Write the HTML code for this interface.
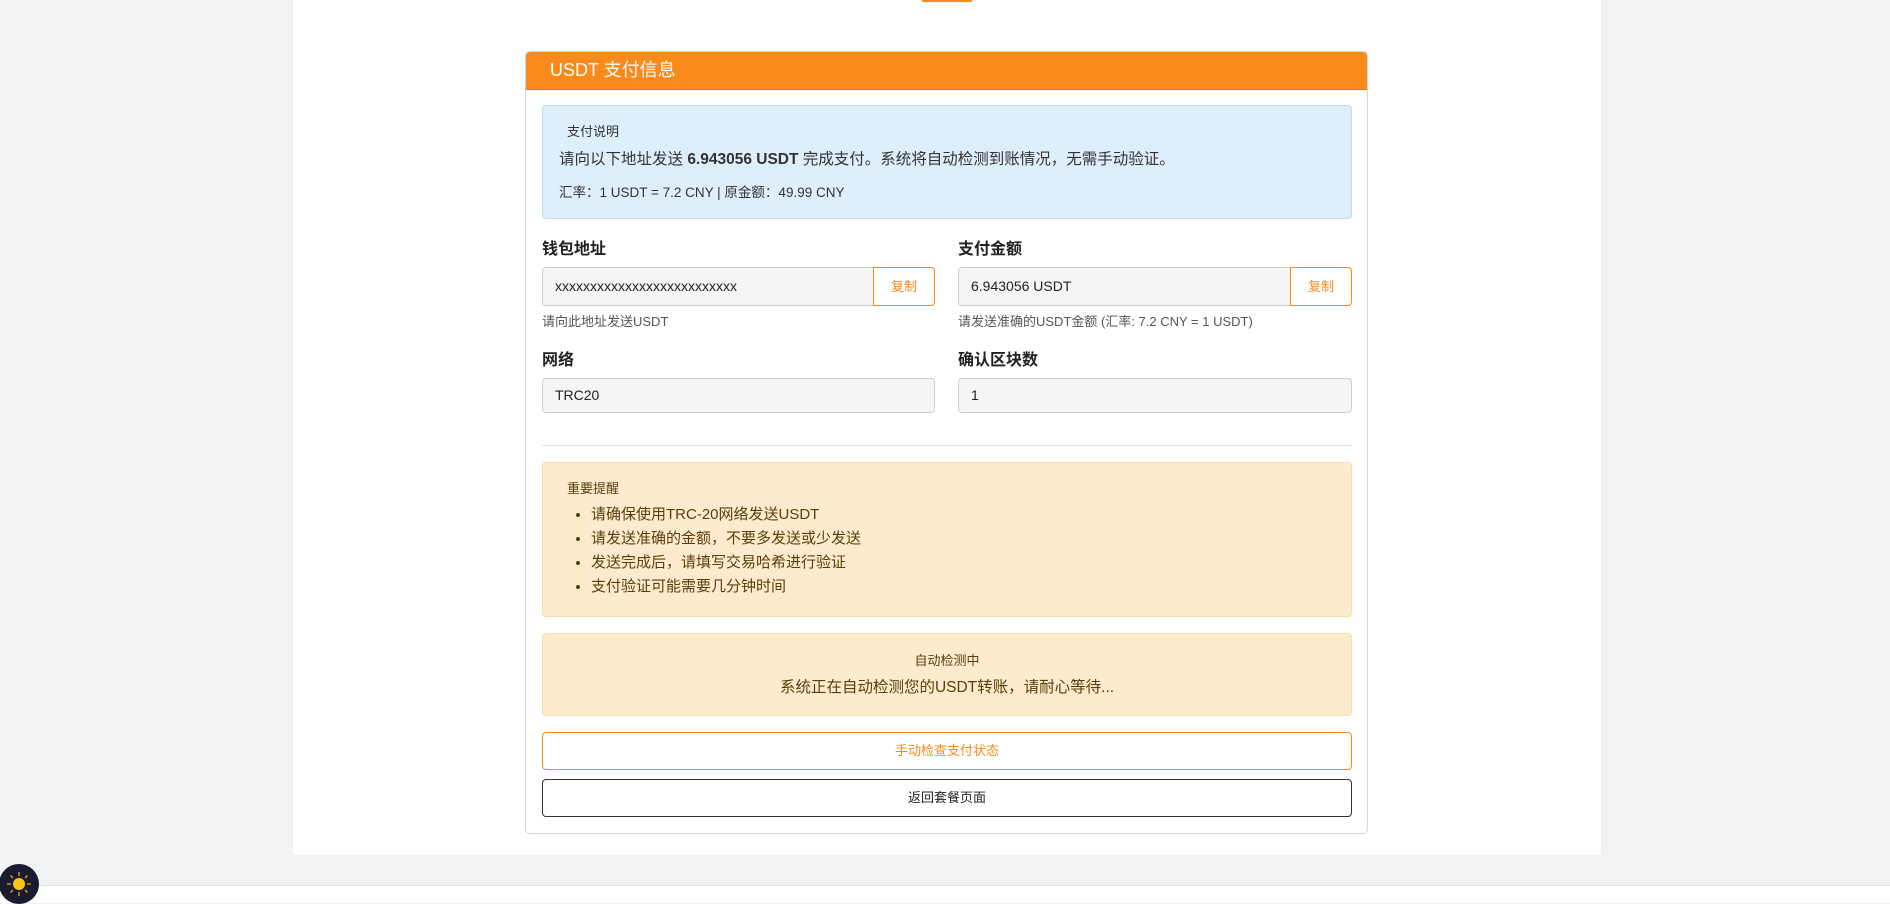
<!DOCTYPE html>
<html><head><meta charset="utf-8"><style>
*{box-sizing:border-box;margin:0;padding:0}
body{width:1890px;height:903px;background:#f1f2f4;font-family:"Liberation Sans","Noto Sans CJK SC",sans-serif;color:#222;position:relative;overflow:hidden}
.page{position:absolute;left:293px;top:0;width:1308px;height:855px;background:#fff}
.topbar{position:absolute;left:922px;top:0;width:50px;height:2px;background:#f98a1b}
.foot{position:absolute;left:0;top:885px;width:1890px;height:18px;background:#fff;border-top:1px solid #e2e2e2}
.card{position:absolute;left:525px;top:51px;width:843px;height:783px;border:1px solid #d6d6d6;border-radius:5px;overflow:hidden;background:#fff}
.hd{height:38px;background:#f98a1b;color:#fff;font-size:18px;line-height:37px;padding-left:24px;border-bottom:1px solid #e57a10}
.info{position:absolute;left:16px;top:53px;width:810px;height:114px;background:#dfeefc;border:1px solid #bfdcf5;border-radius:4px;padding:0 0 0 24px}
.abs{position:absolute;white-space:nowrap}
.lbl{font-size:16px;font-weight:bold;color:#222}
.inp{position:absolute;height:39px;background:#f5f5f5;border:1px solid #cfcfcf;border-radius:4px;font-size:14px;line-height:37px;padding-left:12px;color:#222}
.cp{position:absolute;top:0;right:-1px;width:62px;height:39px;border:1px solid #f98a1b;border-radius:0 4px 4px 0;background:#fff;color:#f98a1b;font-size:13px;text-align:center;line-height:37px;top:-1px}
.hint{font-size:13px;color:#555}
.warn{position:absolute;left:16px;top:410px;width:810px;height:155px;background:#feebcd;border:1px solid #f8dcaf;border-radius:4px;color:#5a3d0c}
.warn li{font-size:15px;line-height:24px}
.auto{position:absolute;left:16px;top:581px;width:810px;height:83px;background:#feebcd;border:1px solid #f8dcaf;border-radius:4px;color:#5a3d0c;text-align:center}
.btn{position:absolute;left:16px;width:810px;height:38px;border-radius:4px;font-size:13px;text-align:center;line-height:36px;background:#fff}
</style></head><body>
<div class="page"></div>
<div class="topbar"></div>
<div class="foot"></div>
<div class="card">
 <div class="hd">USDT 支付信息</div>
 <div class="info">
  <div class="abs" style="left:24px;top:15px;font-size:13px;color:#333">支付说明</div>
  <div class="abs" style="left:16px;top:41px;font-size:15.5px;color:#333">请向以下地址发送 <b>6.943056 USDT</b> 完成支付。系统将自动检测到账情况，无需手动验证。</div>
  <div class="abs" style="left:16px;top:75px;font-size:13.5px;color:#333">汇率：1 USDT = 7.2 CNY | 原金额：49.99 CNY</div>
 </div>
 <div class="abs lbl" style="left:16px;top:183px">钱包地址</div>
 <div class="inp" style="left:16px;top:215px;width:393px">xxxxxxxxxxxxxxxxxxxxxxxxxx<div class="cp">复制</div></div>
 <div class="abs hint" style="left:16px;top:259px">请向此地址发送USDT</div>
 <div class="abs lbl" style="left:432px;top:183px">支付金额</div>
 <div class="inp" style="left:432px;top:215px;width:394px">6.943056 USDT<div class="cp">复制</div></div>
 <div class="abs hint" style="left:432px;top:259px">请发送准确的USDT金额 (汇率: 7.2 CNY = 1 USDT)</div>
 <div class="abs lbl" style="left:16px;top:294px">网络</div>
 <div class="inp" style="left:16px;top:326px;width:393px;height:35px;line-height:33px">TRC20</div>
 <div class="abs lbl" style="left:432px;top:294px">确认区块数</div>
 <div class="inp" style="left:432px;top:326px;width:394px;height:35px;line-height:33px">1</div>
 <div class="abs" style="left:16px;top:393px;width:810px;height:1px;background:#e4e4e4"></div>
 <div class="warn">
  <div class="abs" style="left:24px;top:15px;font-size:13px">重要提醒</div>
  <ul style="position:absolute;left:48px;top:40px">
   <li>请确保使用TRC-20网络发送USDT</li>
   <li>请发送准确的金额，不要多发送或少发送</li>
   <li>发送完成后，请填写交易哈希进行验证</li>
   <li>支付验证可能需要几分钟时间</li>
  </ul>
 </div>
 <div class="auto">
  <div style="font-size:13px;margin-top:16px">自动检测中</div>
  <div style="font-size:15.5px;margin-top:6px">系统正在自动检测您的USDT转账，请耐心等待...</div>
 </div>
 <div class="btn" style="top:680px;border:1px solid #f98a1b;color:#f98a1b">手动检查支付状态</div>
 <div class="btn" style="top:727px;border:1px solid #333;color:#222">返回套餐页面</div>
</div>
<svg style="position:absolute;left:0;top:864px" width="40" height="40" viewBox="0 0 40 40">
 <circle cx="19" cy="20" r="20" fill="#1a1b2e"/>
 <g stroke="#e0a020" stroke-width="1.3">
  <line x1="19" y1="8" x2="19" y2="12"/><line x1="19" y1="28" x2="19" y2="32"/>
  <line x1="7" y1="20" x2="11" y2="20"/><line x1="27" y1="20" x2="31" y2="20"/>
  <line x1="10.5" y1="11.5" x2="13" y2="14"/><line x1="25" y1="26" x2="27.5" y2="28.5"/>
  <line x1="27.5" y1="11.5" x2="25" y2="14"/><line x1="13" y1="26" x2="10.5" y2="28.5"/>
 </g>
 <circle cx="19" cy="20" r="6" fill="#fcc419"/>
</svg>
</body></html>
